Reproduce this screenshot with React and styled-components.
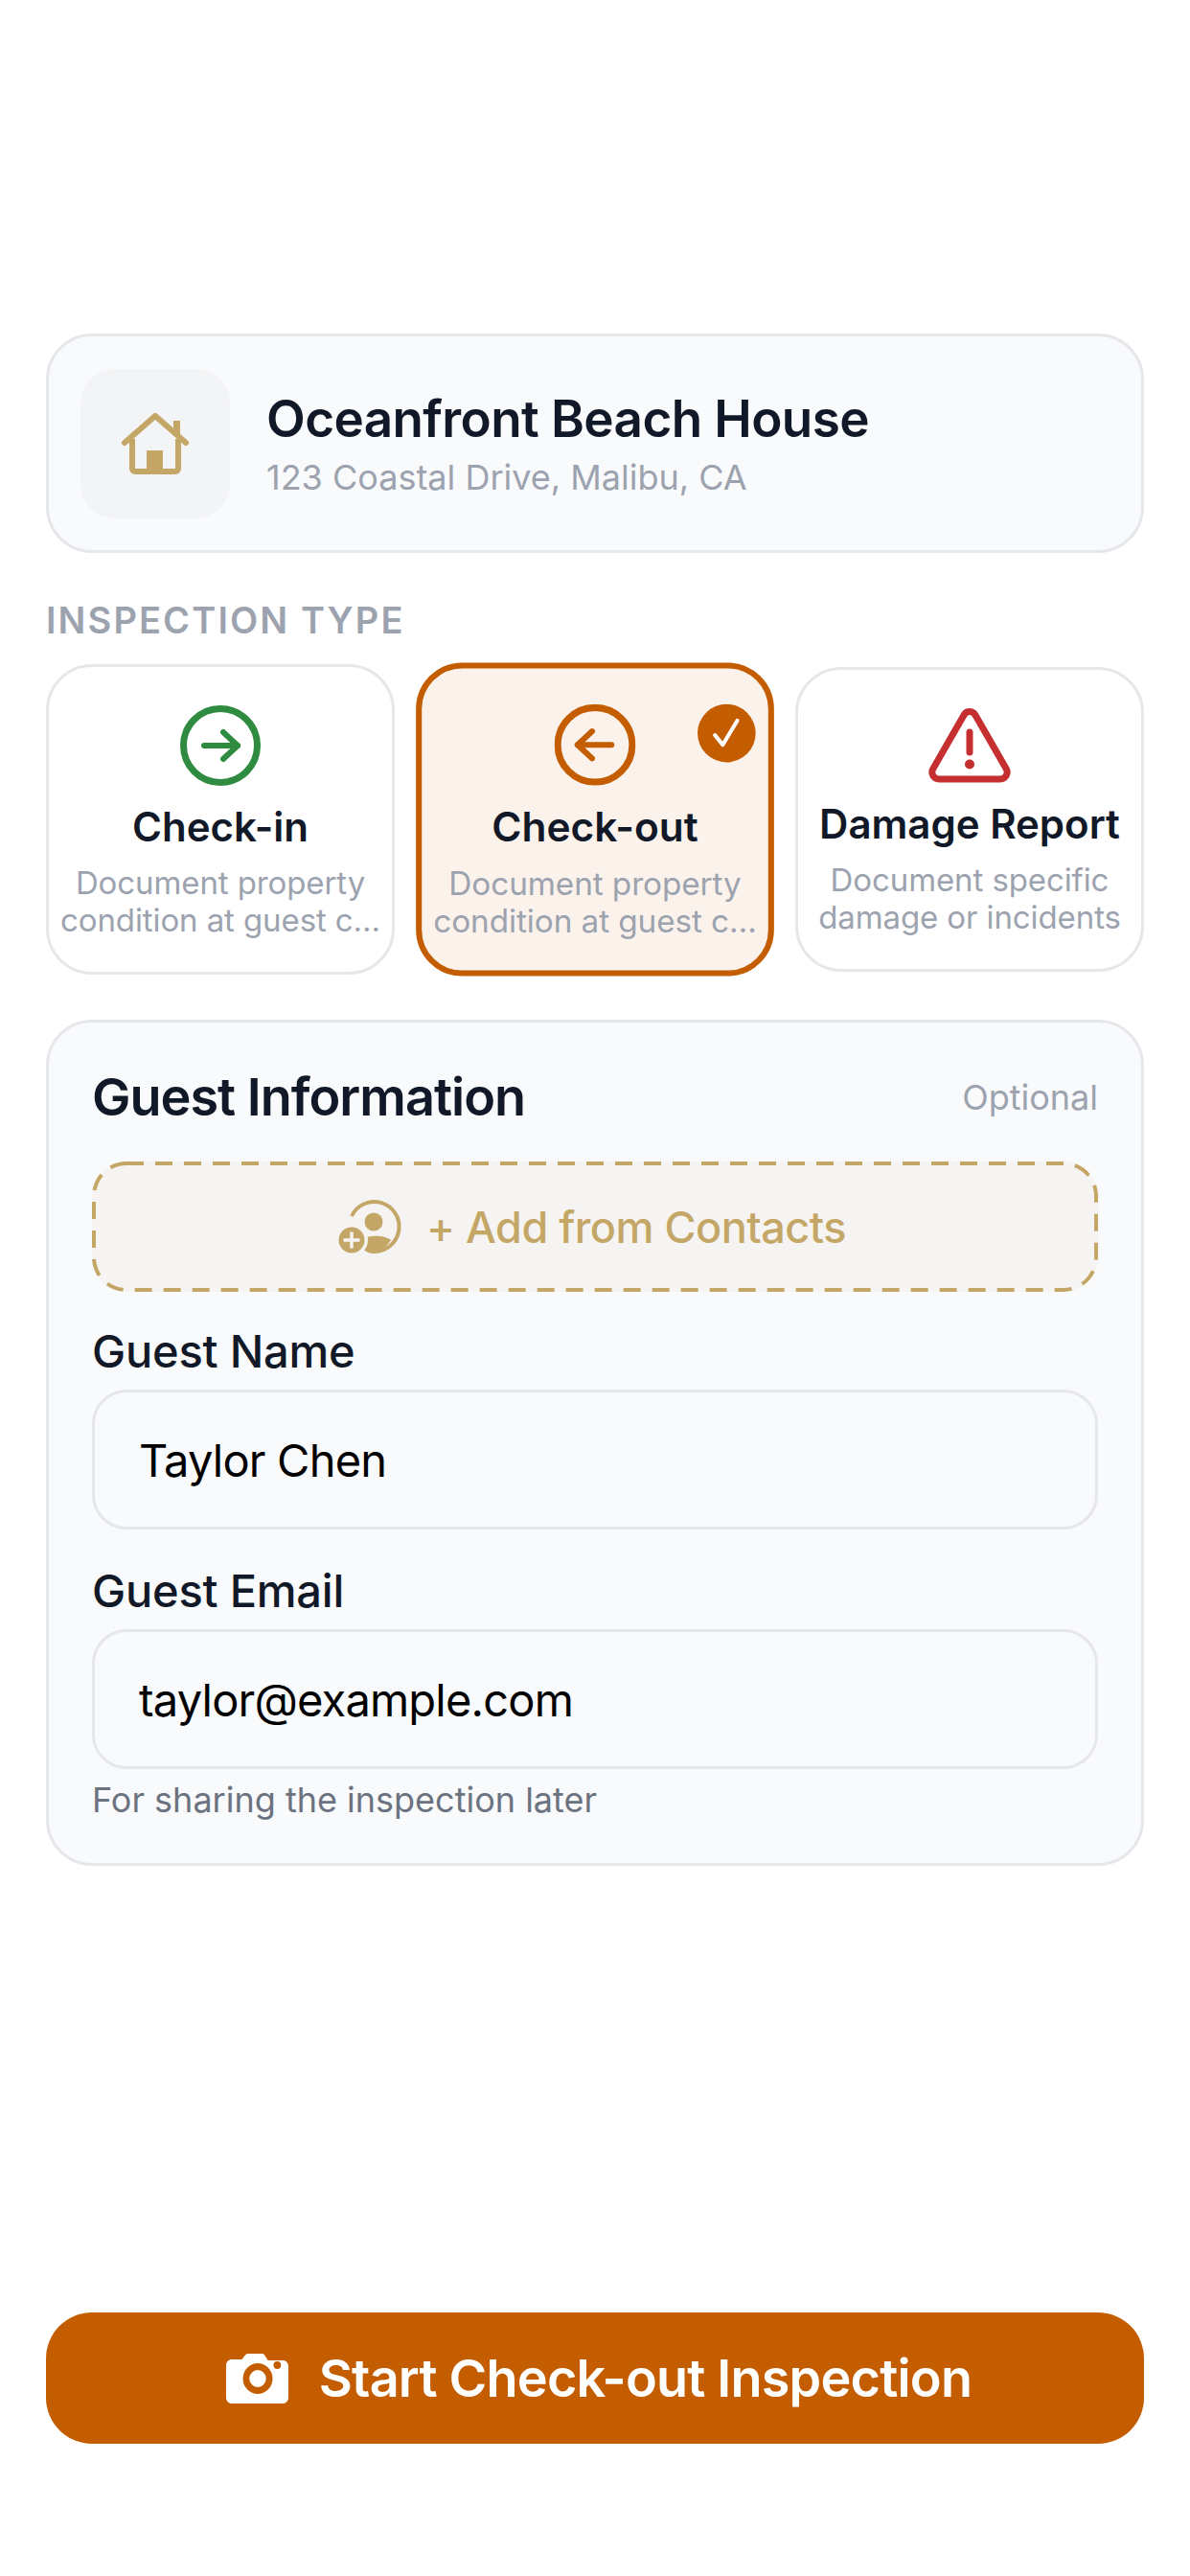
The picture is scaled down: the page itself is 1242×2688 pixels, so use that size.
import React from "react";
import styled, { createGlobalStyle } from "styled-components";

const Global = createGlobalStyle`
  html, body { margin: 0; padding: 0; background: #fff; }
  * { box-sizing: border-box; }
  body { font-family: Inter, "Liberation Sans", sans-serif; -webkit-font-smoothing: antialiased; }
`;

const Page = styled.div`
  width: 1242px; height: 2688px; padding: 348px 48px 138px;
  display: flex; flex-direction: column; background: #fff;
`;
const PropertyCard = styled.section`
  height: 229px; display: flex; align-items: center; gap: 38px;
  padding: 0 33px; background: #f9fafb; border: 3px solid #e5e7eb; border-radius: 48px;
`;
const IconBox = styled.div`
  width: 156px; height: 156px; border-radius: 36px; background: #f3f4f6;
  display: flex; align-items: center; justify-content: center; flex: none;
`;
const PropertyText = styled.div`display: flex; flex-direction: column; gap: 8px;`;
const PropertyName = styled.h1`
  margin: 0; font-size: 53px; line-height: 62px; font-weight: 600; color: #111827; letter-spacing: -0.6px;
`;
const PropertyAddress = styled.p`
  margin: 0; font-size: 36px; line-height: 44px; font-weight: 400; color: #9ca3af;
`;
const SectionLabel = styled.h2`
  margin: 48px 0 24px; font-size: 38px; line-height: 44px; font-weight: 600;
  letter-spacing: 2.1px; color: #9ca3af;
`;
const TypeRow = styled.div`display: flex; gap: 24px; align-items: center;`;
const TypeCard = styled.div`
  flex: 1 1 0; min-width: 0; position: relative; display: flex; flex-direction: column; align-items: center;
  padding: 40px 0 34px;
  background: ${p => (p.$selected ? "#fbf2ec" : "#fff")};
  border: ${p => (p.$selected ? "6px solid #c45d00" : "3px solid #e5e7eb")};
  border-radius: 48px;
  ${p => p.$selected && "transform: scale(1.01); padding-top: 37px; padding-bottom: 31px;"}
`;
const TypeTitle = styled.div`
  margin-top: 18px; font-size: 42px; line-height: 50px; font-weight: 600; color: #111827; white-space: nowrap;
`;
const TypeDesc = styled.div`
  margin-top: 14px; width: 100%; font-size: 33px; line-height: 39px; color: #9ca3af; text-align: center;
  white-space: pre-line; letter-spacing: -0.1px;
`;
const CheckBadge = styled.div`
  position: absolute; top: 37px; right: 13px; width: 60px; height: 60px; border-radius: 50%;
  background: #c45d00; display: flex; align-items: center; justify-content: center;
`;
const GuestCard = styled.section`
  margin-top: 47px; padding: 45px 45px 44px; background: #f9fafb;
  border: 3px solid #e5e7eb; border-radius: 48px; display: flex; flex-direction: column;
`;
const GuestHeader = styled.div`display: flex; align-items: center; justify-content: space-between;`;
const GuestTitle = styled.h2`
  margin: 0; font-size: 54px; line-height: 66px; font-weight: 600; color: #111827; letter-spacing: -1px;
`;
const Optional = styled.span`font-size: 36px; line-height: 44px; color: #9ca3af;`;
const ContactsButton = styled.div`
  position: relative; margin-top: 34px; height: 136px; padding-right: 6px;
  display: flex; align-items: center; justify-content: center; gap: 26px;
  background: #f5f4f2; border-radius: 36px;
  font-size: 45px; font-weight: 500; color: #c4a767; letter-spacing: -0.5px;
`;
const DashedOutline = styled.svg`
  position: absolute; inset: 0; width: 100%; height: 100%; pointer-events: none;
`;
const FieldLabel = styled.label`
  display: block; margin-top: ${p => p.$top}px; font-size: 47px; line-height: 56px; font-weight: 500; color: #111827; letter-spacing: -0.2px;
`;
const Input = styled.div`
  margin-top: 12px; height: 146px; padding: 0 46px; display: flex; align-items: center;
  background: #f9fafb; border: 3px solid #e5e7eb; border-radius: 36px;
  font-size: 47px; color: #000; letter-spacing: -0.8px;
`;
const Helper = styled.p`margin: 10px 0 0; font-size: 36px; line-height: 44px; color: #6b7280;`;
const StartButton = styled.div`
  margin-top: auto; height: 137px; padding-left: 8px;
  display: flex; align-items: center; justify-content: center; gap: 32px;
  background: #c45d00; border-radius: 48px; color: #fff; font-size: 54px; font-weight: 600; letter-spacing: -0.8px;
`;

const HouseIcon = () => (
  <svg width="72" height="64" viewBox="0 0 72 64" fill="none">
    <path d="M4 31 36 3l32 28" stroke="#c4a767" strokeWidth="6" strokeLinecap="round" strokeLinejoin="round" />
    <path d="M12 27v31a3 3 0 0 0 3 3h42a3 3 0 0 0 3-3V27" stroke="#c4a767" strokeWidth="6" strokeLinejoin="round" />
    <rect x="27" y="39" width="17" height="22" fill="#c4a767" />
    <path d="M55 18V8h7v17z" fill="#c4a767" />
  </svg>
);
const ArrowCircle = ({ color, dir }) => (
  <svg width="84" height="84" viewBox="0 0 84 84" fill="none">
    <circle cx="42" cy="42" r="38.5" stroke={color} strokeWidth="7" />
    <g stroke={color} strokeWidth="6" strokeLinecap="round" strokeLinejoin="round" transform={dir === "left" ? "rotate(180 42 42)" : undefined}>
      <path d="M25 42h35" />
      <path d="M45 28l15 14-15 14" />
    </g>
  </svg>
);
const WarningIcon = () => (
  <svg width="86" height="78" viewBox="0 0 86 78" fill="none" style={{ display: "block" }}>
    <path d="M37 7.2 4.8 63.2C2.2 68 5.4 74 11 74h64c5.600 0 8.800-6 6.200-10.800L49 7.200c-2.700-4.800-9.300-4.800-12 0Z" stroke="#c62f2f" strokeWidth="7" strokeLinejoin="round" />
    <path d="M43 25v21" stroke="#c62f2f" strokeWidth="7" strokeLinecap="round" />
    <circle cx="43" cy="58.500" r="5" fill="#c62f2f" />
  </svg>
);
const CheckIcon = () => (
  <svg width="34" height="34" viewBox="0 0 34 34" fill="none">
    <path d="M5 19l8 10L28 4" stroke="#fff" strokeWidth="4" strokeLinecap="round" strokeLinejoin="round" />
  </svg>
);
const ContactAddIcon = () => (
  <svg width="66" height="56" viewBox="0 0 66 56" fill="none">
    <path d="M14 17A26 26 0 1 1 37 54" stroke="#c4a767" strokeWidth="4" />
    <circle cx="37" cy="23" r="9.500" fill="#c4a767" />
    <path d="M20 44c5-7 27-9 35-2-5 8-12 13-19 14-6 0-12-5-16-12Z" fill="#c4a767" />
    <circle cx="14" cy="42" r="17" fill="#f5f4f2" />
    <circle cx="14" cy="42" r="13.500" fill="#c4a767" />
    <path d="M14 33.500v17M5.500 42h17" stroke="#f5f4f2" strokeWidth="3.500" />
  </svg>
);
const CameraIcon = () => (
  <svg width="65" height="52" viewBox="0 0 67 52" preserveAspectRatio="none" style={{ display: "block" }}>
    <path fillRule="evenodd" d="M6 6h11l4-5c.6-.7 1.400-1 2.300-1h15.400c.9 0 1.700.3 2.300 1l4 6h16c3.300 0 6 2.700 6 6v33c0 3.300-2.700 6-6 6H6c-3.300 0-6-2.700-6-6V12c0-3.300 2.700-6 6-6Zm28 36a16 16 0 1 0 0-32 16 16 0 0 0 0 32Zm0-7a9 9 0 1 1 0-18 9 9 0 0 1 0 18Zm21-19a4 4 0 1 0 0-8 4 4 0 0 0 0 8Z" fill="#fff" />
  </svg>
);

const types = [
  { title: "Check-in", desc: "Document property\ncondition at guest c…", icon: <ArrowCircle color="#2e8b40" dir="right" /> },
  { title: "Check-out", desc: "Document property\ncondition at guest c…", icon: <ArrowCircle color="#c45d00" dir="left" />, selected: true },
  { title: "Damage Report", desc: "Document specific\ndamage or incidents", icon: <WarningIcon /> },
];

export default function App() {
  return (
    <Page>
      <Global />
      <PropertyCard>
        <IconBox><HouseIcon /></IconBox>
        <PropertyText>
          <PropertyName>Oceanfront Beach House</PropertyName>
          <PropertyAddress>123 Coastal Drive, Malibu, CA</PropertyAddress>
        </PropertyText>
      </PropertyCard>
      <SectionLabel>INSPECTION TYPE</SectionLabel>
      <TypeRow>
        {types.map(t => (
          <TypeCard key={t.title} $selected={t.selected}>
            {t.icon}
            <TypeTitle>{t.title}</TypeTitle>
            <TypeDesc>{t.desc}</TypeDesc>
            {t.selected && <CheckBadge><CheckIcon /></CheckBadge>}
          </TypeCard>
        ))}
      </TypeRow>
      <GuestCard>
        <GuestHeader>
          <GuestTitle>Guest Information</GuestTitle>
          <Optional>Optional</Optional>
        </GuestHeader>
        <ContactsButton>
          <DashedOutline viewBox="0 0 1050 136" preserveAspectRatio="none">
            <rect x="2" y="2" width="1046" height="132" rx="34" fill="none" stroke="#c4a767" strokeWidth="4" strokeDasharray="18 12" />
          </DashedOutline>
          <ContactAddIcon />+ Add from Contacts
        </ContactsButton>
        <FieldLabel $top={34}>Guest Name</FieldLabel>
        <Input>Taylor Chen</Input>
        <FieldLabel $top={36}>Guest Email</FieldLabel>
        <Input>taylor@example.com</Input>
        <Helper>For sharing the inspection later</Helper>
      </GuestCard>
      <StartButton><CameraIcon />Start Check-out Inspection</StartButton>
    </Page>
  );
}
